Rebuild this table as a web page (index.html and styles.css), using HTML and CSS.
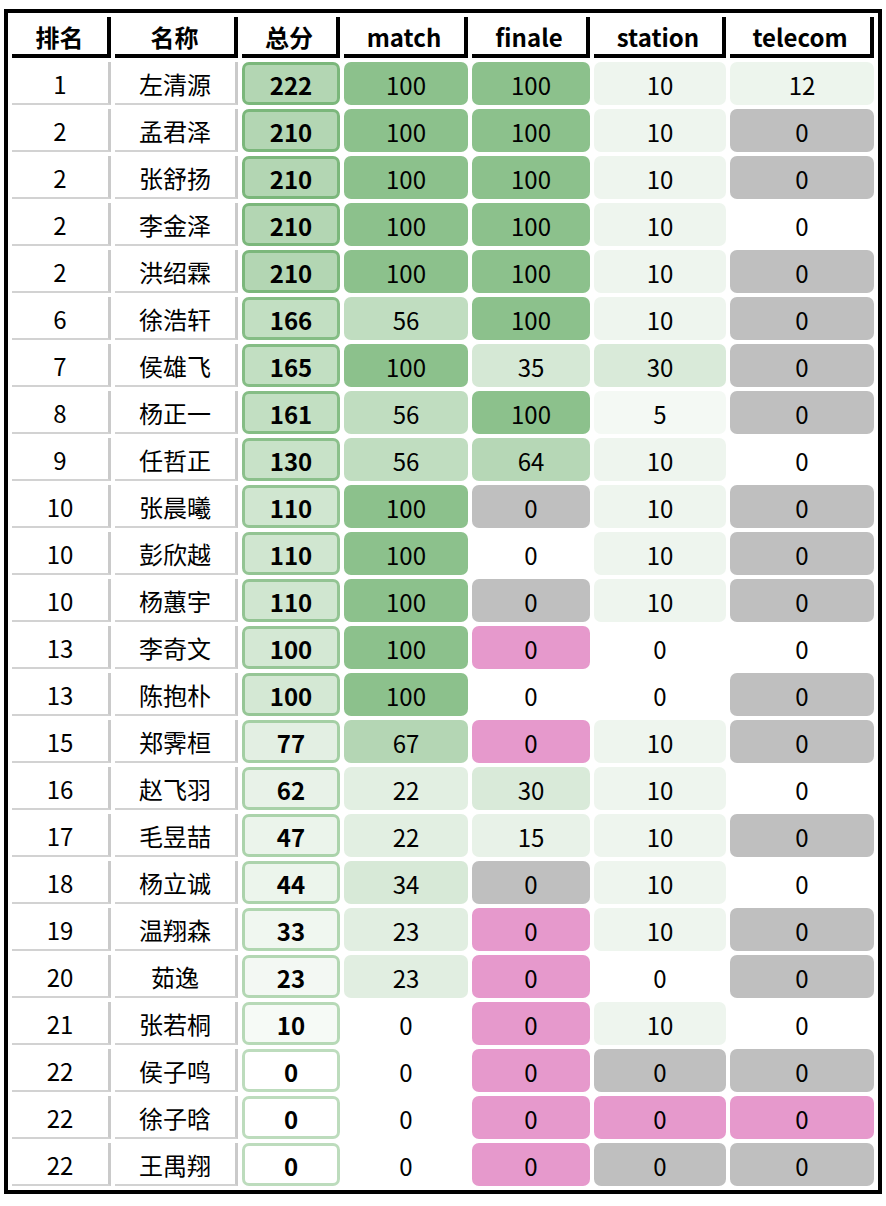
FILE: index.html
```html
<!DOCTYPE html>
<html lang="zh">
<head>
<meta charset="utf-8">
<title>排名</title>
<link rel="stylesheet" href="styles.css">
</head>
<body>
<table class="board">
<colgroup>
<col class="w-rank"><col class="w-name"><col class="w-score"><col class="w-match"><col class="w-finale"><col class="w-station"><col class="w-telecom">
</colgroup>
<thead>
<tr><th>排名</th><th>名称</th><th>总分</th><th>match</th><th>finale</th><th>station</th><th>telecom</th></tr>
</thead>
<tbody>
<tr><td class="rk">1</td><td class="nm">左清源</td><td class="sc s222">222</td><td class="c g100">100</td><td class="c g100">100</td><td class="c g10">10</td><td class="c g12">12</td></tr>
<tr><td class="rk">2</td><td class="nm">孟君泽</td><td class="sc s222">210</td><td class="c g100">100</td><td class="c g100">100</td><td class="c g10">10</td><td class="c zg">0</td></tr>
<tr><td class="rk">2</td><td class="nm">张舒扬</td><td class="sc s222">210</td><td class="c g100">100</td><td class="c g100">100</td><td class="c g10">10</td><td class="c zg">0</td></tr>
<tr><td class="rk">2</td><td class="nm">李金泽</td><td class="sc s222">210</td><td class="c g100">100</td><td class="c g100">100</td><td class="c g10">10</td><td class="c">0</td></tr>
<tr><td class="rk">2</td><td class="nm">洪绍霖</td><td class="sc s222">210</td><td class="c g100">100</td><td class="c g100">100</td><td class="c g10">10</td><td class="c zg">0</td></tr>
<tr><td class="rk">6</td><td class="nm">徐浩轩</td><td class="sc s166">166</td><td class="c g56">56</td><td class="c g100">100</td><td class="c g10">10</td><td class="c zg">0</td></tr>
<tr><td class="rk">7</td><td class="nm">侯雄飞</td><td class="sc s166">165</td><td class="c g100">100</td><td class="c g35">35</td><td class="c g30">30</td><td class="c zg">0</td></tr>
<tr><td class="rk">8</td><td class="nm">杨正一</td><td class="sc s166">161</td><td class="c g56">56</td><td class="c g100">100</td><td class="c g5">5</td><td class="c zg">0</td></tr>
<tr><td class="rk">9</td><td class="nm">任哲正</td><td class="sc s130">130</td><td class="c g56">56</td><td class="c g64">64</td><td class="c g10">10</td><td class="c">0</td></tr>
<tr><td class="rk">10</td><td class="nm">张晨曦</td><td class="sc s110">110</td><td class="c g100">100</td><td class="c zg">0</td><td class="c g10">10</td><td class="c zg">0</td></tr>
<tr><td class="rk">10</td><td class="nm">彭欣越</td><td class="sc s110">110</td><td class="c g100">100</td><td class="c">0</td><td class="c g10">10</td><td class="c zg">0</td></tr>
<tr><td class="rk">10</td><td class="nm">杨蕙宇</td><td class="sc s110">110</td><td class="c g100">100</td><td class="c zg">0</td><td class="c g10">10</td><td class="c zg">0</td></tr>
<tr><td class="rk">13</td><td class="nm">李奇文</td><td class="sc s100">100</td><td class="c g100">100</td><td class="c zp">0</td><td class="c">0</td><td class="c">0</td></tr>
<tr><td class="rk">13</td><td class="nm">陈抱朴</td><td class="sc s100">100</td><td class="c g100">100</td><td class="c">0</td><td class="c">0</td><td class="c zg">0</td></tr>
<tr><td class="rk">15</td><td class="nm">郑霁桓</td><td class="sc s77">77</td><td class="c g67">67</td><td class="c zp">0</td><td class="c g10">10</td><td class="c zg">0</td></tr>
<tr><td class="rk">16</td><td class="nm">赵飞羽</td><td class="sc s62">62</td><td class="c g22">22</td><td class="c g30">30</td><td class="c g10">10</td><td class="c">0</td></tr>
<tr><td class="rk">17</td><td class="nm">毛昱喆</td><td class="sc s47">47</td><td class="c g22">22</td><td class="c g15">15</td><td class="c g10">10</td><td class="c zg">0</td></tr>
<tr><td class="rk">18</td><td class="nm">杨立诚</td><td class="sc s44">44</td><td class="c g34">34</td><td class="c zg">0</td><td class="c g10">10</td><td class="c">0</td></tr>
<tr><td class="rk">19</td><td class="nm">温翔森</td><td class="sc s33">33</td><td class="c g23">23</td><td class="c zp">0</td><td class="c g10">10</td><td class="c zg">0</td></tr>
<tr><td class="rk">20</td><td class="nm">茹逸</td><td class="sc s23">23</td><td class="c g23">23</td><td class="c zp">0</td><td class="c">0</td><td class="c zg">0</td></tr>
<tr><td class="rk">21</td><td class="nm">张若桐</td><td class="sc s10">10</td><td class="c">0</td><td class="c zp">0</td><td class="c g10">10</td><td class="c">0</td></tr>
<tr><td class="rk">22</td><td class="nm">侯子鸣</td><td class="sc s0">0</td><td class="c">0</td><td class="c zp">0</td><td class="c zg">0</td><td class="c zg">0</td></tr>
<tr><td class="rk">22</td><td class="nm">徐子晗</td><td class="sc s0">0</td><td class="c">0</td><td class="c zp">0</td><td class="c zp">0</td><td class="c zp">0</td></tr>
<tr><td class="rk">22</td><td class="nm">王禺翔</td><td class="sc s0">0</td><td class="c">0</td><td class="c zp">0</td><td class="c zg">0</td><td class="c zg">0</td></tr>
</tbody>
</table>
</body>
</html>
```

FILE: styles.css
```css
html, body {
  margin: 0;
  padding: 0;
  background: #ffffff;
}

body {
  font-family: "Noto Sans CJK SC", "Noto Sans", sans-serif;
  font-size: 24px;
  color: #000000;
}

.board {
  margin: 9px 0 0 4px;
  width: 878px;
  table-layout: fixed;
  border-collapse: separate;
  border-spacing: 4px;
  border: 4px solid #000000;
  background: #ffffff;
}

.w-rank { width: 99px; }
.w-name { width: 123px; }
.w-score { width: 98px; }
.w-match { width: 124px; }
.w-finale { width: 118px; }
.w-station { width: 132px; }
.w-telecom { width: 144px; }

.board th {
  box-sizing: border-box;
  height: 41px;
  padding: 2px 0 0 0;
  font-weight: 700;
  font-size: 24px;
  line-height: 30px;
  text-align: center;
  vertical-align: middle;
  background: #ffffff;
  border-right: 4px solid #000000;
  border-bottom: 4px solid #000000;
}

.board td {
  box-sizing: border-box;
  height: 43px;
  padding: 2px 0 0 0;
  line-height: 30px;
  text-align: center;
  vertical-align: middle;
  white-space: nowrap;
}

.board td.rk,
.board td.nm {
  background: #ffffff;
  border-right: 3px solid #cacaca;
  border-bottom: 2px solid #d2d2d2;
}

.board td.sc {
  font-weight: 700;
  border: 3px solid #bddcbd;
  border-radius: 7px;
  background: #ffffff;
}

.board td.c {
  border-radius: 7px;
}

/* value scale (0-100) */
.g100 { background: #8cc18c; }
.g67 { background: #b4d6b4; }
.g64 { background: #b6d7b6; }
.g56 { background: #c0ddc0; }
.g35 { background: #d5e8d5; }
.g34 { background: #d7e9d7; }
.g30 { background: #d9ead9; }
.g23 { background: #e1eee1; }
.g22 { background: #e2efe2; }
.g15 { background: #e8f2e8; }
.g12 { background: #edf5ed; }
.g10 { background: #eef5ee; }
.g5 { background: #f4f9f4; }

/* zero markers */
.zg { background: #bfbfbf; }
.zp { background: #e699cc; }

/* total score scale */
.board td.s222 { background: #b3d6b3; border-color: #7bb77b; }
.board td.s166 { background: #c2dfc2; border-color: #85bd85; }
.board td.s130 { background: #c8e2c8; border-color: #8bc08b; }
.board td.s110 { background: #d0e6d0; border-color: #93c493; }
.board td.s100 { background: #d4e8d4; border-color: #96c696; }
.board td.s77 { background: #e3efe3; border-color: #a4cfa4; }
.board td.s62 { background: #e8f2e8; border-color: #a8d1a8; }
.board td.s47 { background: #ebf4eb; border-color: #abd3ab; }
.board td.s44 { background: #ecf5ec; border-color: #acd3ac; }
.board td.s33 { background: #f0f7f0; border-color: #b0d6b0; }
.board td.s23 { background: #f3f8f3; border-color: #b3d7b3; }
.board td.s10 { background: #f6faf6; border-color: #b7d9b7; }
.board td.s0 { background: #ffffff; border-color: #bddcbd; }
```
